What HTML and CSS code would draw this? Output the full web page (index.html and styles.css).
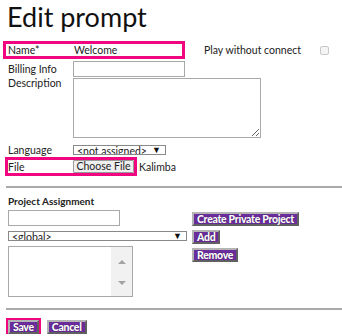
FILE: index.html
```html
<!DOCTYPE html>
<html lang="en">
<head>
    <meta charset="UTF-8">
    <meta name="viewport" content="width=device-width, initial-scale=1.0">
    <title>Edit prompt</title>
    <link rel="stylesheet" href="styles.css">
</head>
<body>
    <h1>Edit prompt</h1>
    <form class="prompt-form">
        <div class="row row-name">
            <div class="field highlight">
                <label class="label" for="promptName">Name*</label>
                <input class="plain-input" type="text" id="promptName" value="Welcome">
            </div>
            <span class="play-label">Play without connect</span>
            <span class="checkbox"></span>
        </div>
        <div class="row row-billing">
            <label class="label" for="billing">Billing Info</label>
            <input class="text-input" type="text" id="billing">
        </div>
        <div class="row row-desc">
            <label class="label" for="desc">Description</label>
            <textarea class="desc-input" id="desc"></textarea>
        </div>
        <div class="row row-lang">
            <span class="label">Language</span>
            <div class="select select-lang">
                <span class="select-text">&lt;not assigned&gt;</span>
                <span class="select-arrow">▼</span>
            </div>
        </div>
        <div class="row row-file">
            <div class="field highlight file-box">
                <span class="label">File</span>
                <span class="file-btn">Choose File</span>
            </div>
            <span class="file-name">Kalimba</span>
        </div>

        <hr class="divider">

        <div class="section-title">Project Assignment</div>
        <div class="project">
            <div class="project-left">
                <input class="text-input" type="text">
                <div class="select select-global">
                    <span class="select-text">&lt;global&gt;</span>
                    <span class="select-arrow">▼</span>
                </div>
                <div class="listbox">
                    <div class="scroll">
                        <span class="tri up"></span>
                        <span class="tri down"></span>
                    </div>
                </div>
            </div>
            <div class="project-right">
                <button type="button" class="btn">Create Private Project</button>
                <button type="button" class="btn">Add</button>
                <button type="button" class="btn">Remove</button>
            </div>
        </div>

        <hr class="divider divider-bottom">

        <div class="actions">
            <button type="submit" class="btn btn-save">Save</button>
            <button type="button" class="btn">Cancel</button>
        </div>
    </form>
</body>
</html>
```

FILE: styles.css
```css
* {
    margin: 0;
    padding: 0;
    box-sizing: border-box;
}

body {
    padding-left: 8px;
    font-family: Lato, "Noto Sans", sans-serif;
    font-size: 10.5px;
    color: #222;
    background: white;
    overflow: hidden;
}

h1 {
    font-size: 27px;
    font-weight: normal;
    line-height: 34px;
    margin-left: -1px;
    color: #111;
}

.prompt-form {
    margin-top: 7px;
}

.row {
    display: flex;
    align-items: center;
}

.label {
    width: 65px;
    flex-shrink: 0;
}

.highlight {
    display: flex;
    align-items: center;
    border: 3px solid #f0067f;
}

/* name row */
.row-name {
    width: 321px;
}

.row-name .highlight {
    margin-left: -5px;
    width: 182px;
    height: 18px;
    padding-left: 2px;
}

.plain-input {
    border: none;
    outline: none;
    font: inherit;
    color: #222;
    width: 108px;
    padding-left: 1px;
    background: transparent;
}

.play-label {
    margin-left: 19px;
}

.checkbox {
    margin-left: auto;
    width: 9px;
    height: 9px;
    border: 1px solid #c8c8c8;
    border-radius: 2px;
    background: #f4f4f4;
}

.text-input {
    width: 112px;
    height: 16px;
    border: 1px solid #a9a9a9;
}

.row-billing {
    margin-top: 2px;
}

.row-desc {
    margin-top: 1px;
    align-items: flex-start;
}

.row-desc .label {
    line-height: 10px;
}

.desc-input {
    width: 188px;
    height: 60px;
    border: 1px solid #a9a9a9;
}

.row-lang {
    margin-top: 7px;
    height: 10px;
}

.select {
    display: flex;
    align-items: center;
    height: 10px;
    border: 1px solid #888;
    overflow: hidden;
    font-size: 10.5px;
    line-height: 10px;
    padding: 0 4px 0 3px;
}

.select-text {
    flex: 1;
    padding-top: 2px;
}

.select-arrow {
    font-size: 9px;
    color: #111;
}

.select-lang {
    width: 93px;
}

.row-file {
    margin-top: 2px;
}

.file-box {
    margin-left: -3px;
    width: 132px;
    height: 19px;
}

.file-box .label {
    width: 65px;
}

.file-btn {
    width: 61px;
    height: 13px;
    line-height: 11px;
    text-align: center;
    background: #efefef;
    border: 1px solid #9a9a9a;
    border-radius: 1px;
}

.file-name {
    margin-left: 2px;
}

.divider {
    border: none;
    border-top: 2px solid #aaa;
    margin-left: -2px;
    width: 336px;
}

.row-file + .divider {
    margin-top: 10px;
}

.section-title {
    margin-top: 7px;
    font-weight: bold;
    font-size: 10px;
    line-height: 12px;
}

.project {
    display: flex;
    gap: 5px;
    margin-top: 3px;
}

.project-left {
    display: flex;
    flex-direction: column;
    gap: 5px;
    width: 179px;
}

.select-global {
    width: 179px;
}

.listbox {
    width: 125px;
    height: 51px;
    border: 1px solid #a9a9a9;
    display: flex;
    justify-content: flex-end;
}

.scroll {
    width: 21px;
    background: #f1f1f1;
    display: flex;
    flex-direction: column;
    align-items: center;
    justify-content: space-between;
    padding: 13px 0 11px;
}

.tri {
    width: 0;
    height: 0;
    border-left: 4px solid transparent;
    border-right: 4px solid transparent;
}

.tri.up {
    border-bottom: 4px solid #a3a3a3;
}

.tri.down {
    border-top: 4px solid #a3a3a3;
}

.project-right {
    display: flex;
    flex-direction: column;
    align-items: flex-start;
    gap: 4px;
    padding-top: 2px;
}

.btn {
    background: #6a2d9b;
    color: white;
    font-family: Lato, sans-serif;
    font-weight: 900;
    font-size: 10.5px;
    letter-spacing: -0.3px;
    height: 14px;
    line-height: 10px;
    padding: 0 3px;
    border: 2px outset #b4b4b4;
    text-shadow: 0 0 1px #2a0a40;
    cursor: pointer;
}

.btn:hover {
    background: #7a3aab;
}

.divider-bottom {
    margin-top: 11px;
}

.actions {
    display: flex;
    align-items: center;
    gap: 8px;
    margin-top: 10px;
}

.btn-save {
    box-shadow: 0 0 0 2px #f0067f;
}
```
